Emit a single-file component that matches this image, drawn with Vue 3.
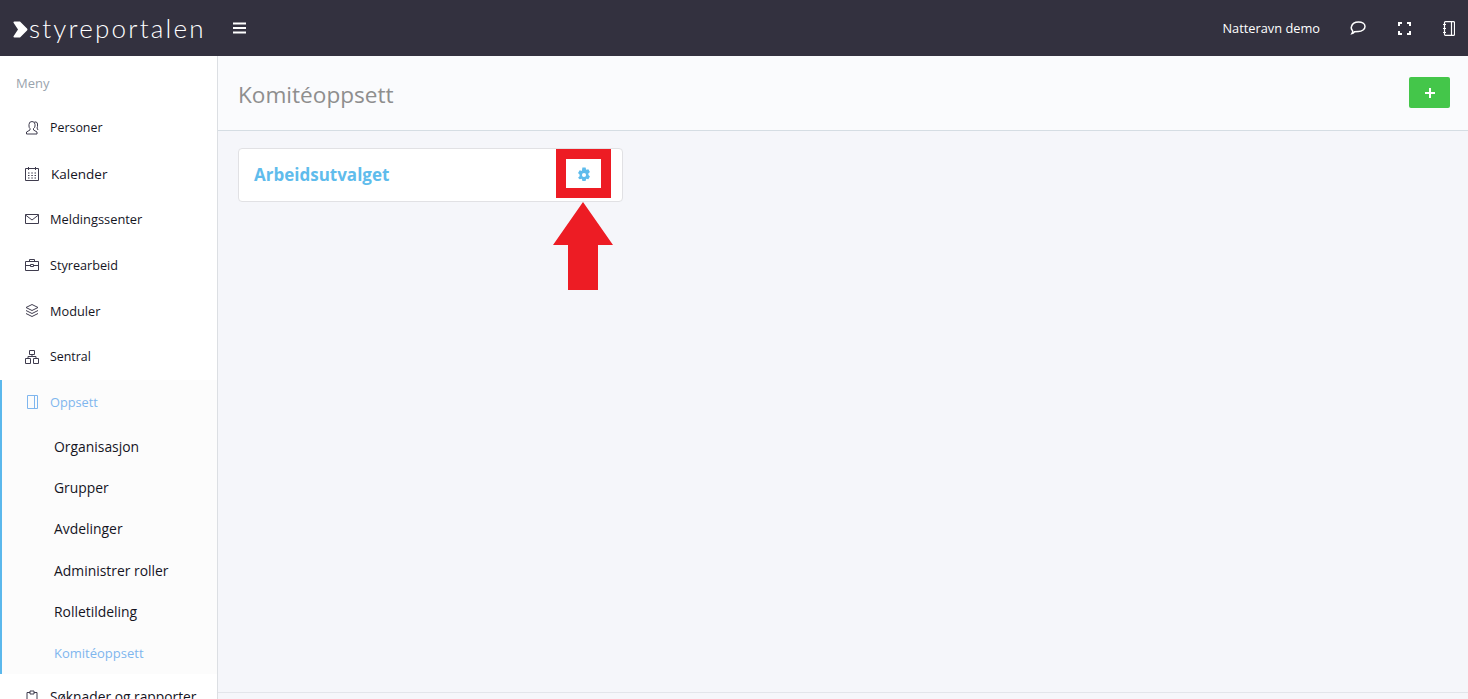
<template>
  <div class="app">
    <header class="topbar">
      <div class="brand">
        <svg class="brand-mark" width="15" height="17" viewBox="0 0 15 17">
          <path d="M1.500 .5h5.500l7 7a1.500 1.500 0 0 1 0 2l-7 7H1.500a1 1 0 0 1-.8-1.500L5 8.500 .7 2a1 1 0 0 1 .8-1.500z" fill="#fff" />
        </svg>
        <span class="brand-name">styreportalen</span>
      </div>
      <button class="menu-toggle" aria-label="Meny">
        <svg width="13" height="12" viewBox="0 0 13 12">
          <path d="M0 1.500h13M0 6h13M0 10.500h13" stroke="#fff" stroke-width="2" />
        </svg>
      </button>
      <div class="topbar-right">
        <span class="user-name">Natteravn demo</span>
        <svg class="top-icon" width="16" height="16" viewBox="0 0 16 16" fill="none" stroke="#fff" stroke-width="1.500">
          <path d="M8.500 2C12 2 15 3.800 15 6.500S12 11.500 8.500 11.500c-1.500 0-3 0-4 .2-.7.8-1.200 1.500-2.500 1.800.500-.8.800-1.600.6-2.700C1.500 9.700 1 8 1.500 6.500 2.300 3.600 5.500 2 8.500 2z" />
        </svg>
        <svg class="top-icon" width="13" height="13" viewBox="0 0 13 13" fill="none" stroke="#fff" stroke-width="2">
          <path d="M1 4V1h3M9 1h3v3M12 9v3H9M4 12H1V9" />
        </svg>
        <svg class="top-icon" width="12" height="15" viewBox="0 0 12 15" fill="none" stroke="#fff" stroke-width="1.200">
          <rect x="1.500" y=".6" width="10" height="13.800" rx="1" />
          <path d="M8.500 .6v13.800M0 3.500h3M0 7.500h3M0 11.500h3" />
        </svg>
      </div>
    </header>

    <div class="layout">
      <aside class="sidebar">
        <div class="side-label">Meny</div>
        <div
          v-for="item in menu"
          :key="item.label"
          class="group"
          :class="{ open: item.children }"
        >
          <a class="side-item" :class="{ current: item.children }">
            <svg class="side-icon" width="14" height="14" viewBox="0 0 14 14" fill="none" stroke-width="1">
              <path :d="item.icon" />
            </svg>
            <span :style="{ fontSize: item.size + 'px', marginLeft: item.gap + 'px' }">{{ item.label }}</span>
          </a>
          <ul v-if="item.children" class="sub-list">
            <li
              v-for="sub in item.children"
              :key="sub"
              class="sub-item"
              :class="{ active: sub === 'Komitéoppsett' }"
            >
              {{ sub }}
            </li>
          </ul>
        </div>
      </aside>

      <main class="main">
        <div class="page-head">
          <h1 class="page-title">Komitéoppsett</h1>
          <button class="add-button" aria-label="Legg til">
            <svg width="10" height="10" viewBox="0 0 10 10">
              <path d="M5 0v10M0 5h10" stroke="#fff" stroke-width="2" />
            </svg>
          </button>
        </div>
        <div class="content">
          <div class="card">
            <span class="card-title">Arbeidsutvalget</span>
            <svg class="gear" width="16" height="16" viewBox="0 0 14 14">
              <path
                fill-rule="evenodd"
                d="M5.600 .5h2.800l.5 1.900 1.900-.5 1.400 2.400-1.400 1.400.1 1.300 1.300 1.400-1.400 2.400-1.900-.5-.5 1.900H5.600l-.5-1.900-1.900.5L1.800 9.400l1.300-1.400.1-1.300-1.400-1.400 1.400-2.400 1.900.5zM7 5.200a1.800 1.800 0 1 0 0 3.600 1.800 1.800 0 0 0 0-3.600z"
              />
            </svg>
            <div class="highlight"></div>
            <svg class="arrow" width="60" height="88" viewBox="0 0 60 88">
              <path d="M30 0l30 43H45v45H15V43H0z" fill="#ed1c24" />
            </svg>
          </div>
        </div>
        <div class="page-foot"></div>
      </main>
    </div>
  </div>
</template>

<script setup>
const menu = [
  {
    label: 'Personer',
    size: 12.4,
    gap: 11,
    icon: 'M4 3.500a3 3 0 0 1 6 0v1.500a3 3 0 0 1-1.500 2.500v1.500l3.500 2v2H1.500v-2L5 9V7.500A3 3 0 0 1 4 5zM9.500 1H11a2 2 0 0 1 1.500 2v2.500L12 7l1 2'
  },
  {
    label: 'Kalender',
    size: 13.5,
    gap: 12,
    icon: 'M.5 1.500h13v12H.5zM3.500 0v3M10.500 0v3M3 6h1.500M6.300 6h1.500M9.500 6H11M3 8.500h1.500M6.300 8.500h1.500M9.500 8.500H11M3 11h1.500M6.300 11h1.500M9.500 11H11'
  },
  {
    label: 'Meldingssenter',
    size: 12.85,
    gap: 11,
    icon: 'M.5 2.500h13v9H.5zM.5 3L7 8l6.500-5'
  },
  {
    label: 'Styrearbeid',
    size: 12.65,
    gap: 11,
    icon: 'M.5 3.500h13v9H.5zM4.500 3.500v-2h5v2M.5 7.500h5M8.500 7.500h5M5.500 6.500h3v2h-3z'
  },
  {
    label: 'Moduler',
    size: 12.75,
    gap: 11,
    icon: 'M7 .5l6 3-6 3-6-3zM1 6.500l6 3 6-3M1 9.500l6 3 6-3'
  },
  {
    label: 'Sentral',
    size: 12.4,
    gap: 11,
    icon: 'M4.500.5h5v4h-5zM.5 8.500h5v5h-5zM8.500 8.500h5v5h-5zM7 4.500v2M3 8.500v-2h8v2'
  },
  {
    label: 'Oppsett',
    size: 12.75,
    gap: 11,
    icon: 'M2.500.5h10v13h-10zM9.500.5v13',
    children: [
      'Organisasjon',
      'Grupper',
      'Avdelinger',
      'Administrer roller',
      'Rolletildeling',
      'Komitéoppsett'
    ]
  },
  {
    label: 'Søknader og rapporter',
    size: 13.8,
    gap: 11,
    icon: 'M2 2.500h3M9 2.500h3v11H2v-11M5 1h4v3H5z'
  }
];
</script>

<style>
html,
body {
  margin: 0;
  height: 100%;
  overflow: hidden;
}
</style>

<style scoped>
.app {
  display: flex;
  flex-direction: column;
  height: 699px;
  overflow: hidden;
  font-family: 'Open Sans', 'Liberation Sans', sans-serif;
  font-size: 13px;
  color: #15151f;
}
.topbar {
  display: flex;
  align-items: center;
  flex: 0 0 56px;
  padding: 0 13px;
  background: #33313f;
  color: #fff;
}
.brand {
  display: flex;
  align-items: center;
  width: 220px;
}
.brand-mark {
  margin-top: 3px;
}
.brand-name {
  margin-left: 1px;
  font-family: Lato, sans-serif;
  font-size: 26px;
  font-weight: 300;
  letter-spacing: 2.200px;
}
.menu-toggle {
  display: flex;
  padding: 0;
  border: 0;
  background: none;
}
.topbar-right {
  display: flex;
  align-items: center;
  margin-left: auto;
}
.user-name {
  margin-right: 30px;
  font-size: 12.800px;
}
.top-icon {
  margin-right: 32px;
}
.top-icon:last-child {
  margin-right: 0;
}
.layout {
  display: flex;
  flex: 1;
  min-height: 0;
}
.sidebar {
  flex: 0 0 217px;
  border-right: 1px solid #dcdfe3;
  background: #fff;
  overflow: hidden;
}
.side-label {
  height: 49.100px;
  padding: 18px 0 0 16px;
  box-sizing: border-box;
  color: #9aa3ad;
}
.side-item {
  display: flex;
  align-items: center;
  height: 45.750px;
  padding-left: 25px;
}
.side-icon {
  flex: none;
  stroke: #3f3c4e;
}
.group.open {
  border-left: 2px solid #5bb8ec;
  background: #fcfcfc;
}
.group.open .side-item {
  padding-left: 23px;
}
.side-item.current {
  color: #7fb6ee;
}
.side-item.current .side-icon {
  stroke: #7fb6ee;
}
.sub-list {
  margin: 0;
  padding: 0;
  list-style: none;
}
.sub-item {
  display: flex;
  align-items: center;
  height: 41.400px;
  padding-left: 52px;
  font-size: 13.900px;
}
.sub-item.active {
  color: #7fb6ee;
  font-size: 13px;
}
.main {
  display: flex;
  flex: 1;
  flex-direction: column;
  min-width: 0;
  background: #f5f6fa;
}
.page-head {
  display: flex;
  align-items: center;
  justify-content: space-between;
  box-sizing: border-box;
  flex: 0 0 75px;
  padding: 0 18px 0 20px;
  border-bottom: 1px solid #d5dde3;
  background: #fafbfd;
}
.page-title {
  margin: 2px 0 0;
  color: #8e8e8e;
  font-size: 22.600px;
  font-weight: 400;
}
.add-button {
  display: flex;
  align-items: center;
  justify-content: center;
  width: 41px;
  height: 31px;
  margin-top: -1px;
  padding: 0;
  border: 0;
  border-radius: 2px;
  background: #44c64a;
}
.content {
  flex: 1;
  padding: 17px 20px;
}
.card {
  position: relative;
  display: flex;
  align-items: center;
  box-sizing: border-box;
  width: 385px;
  height: 54px;
  padding: 0 15px;
  border: 1px solid #e1e1e4;
  border-radius: 4px;
  background: #fff;
}
.card-title {
  margin-top: -2px;
  color: #5fbcec;
  font-size: 17px;
  font-weight: 700;
}
.gear {
  position: absolute;
  left: 337px;
  top: 18px;
  fill: #5fbcec;
}
.highlight {
  position: absolute;
  left: 317px;
  top: 0;
  box-sizing: border-box;
  width: 55px;
  height: 49px;
  border: 10px solid #ed1c24;
}
.arrow {
  position: absolute;
  left: 314px;
  top: 53px;
}
.page-foot {
  flex: 0 0 6px;
  border-top: 1px solid #e3e5ea;
}
</style>
